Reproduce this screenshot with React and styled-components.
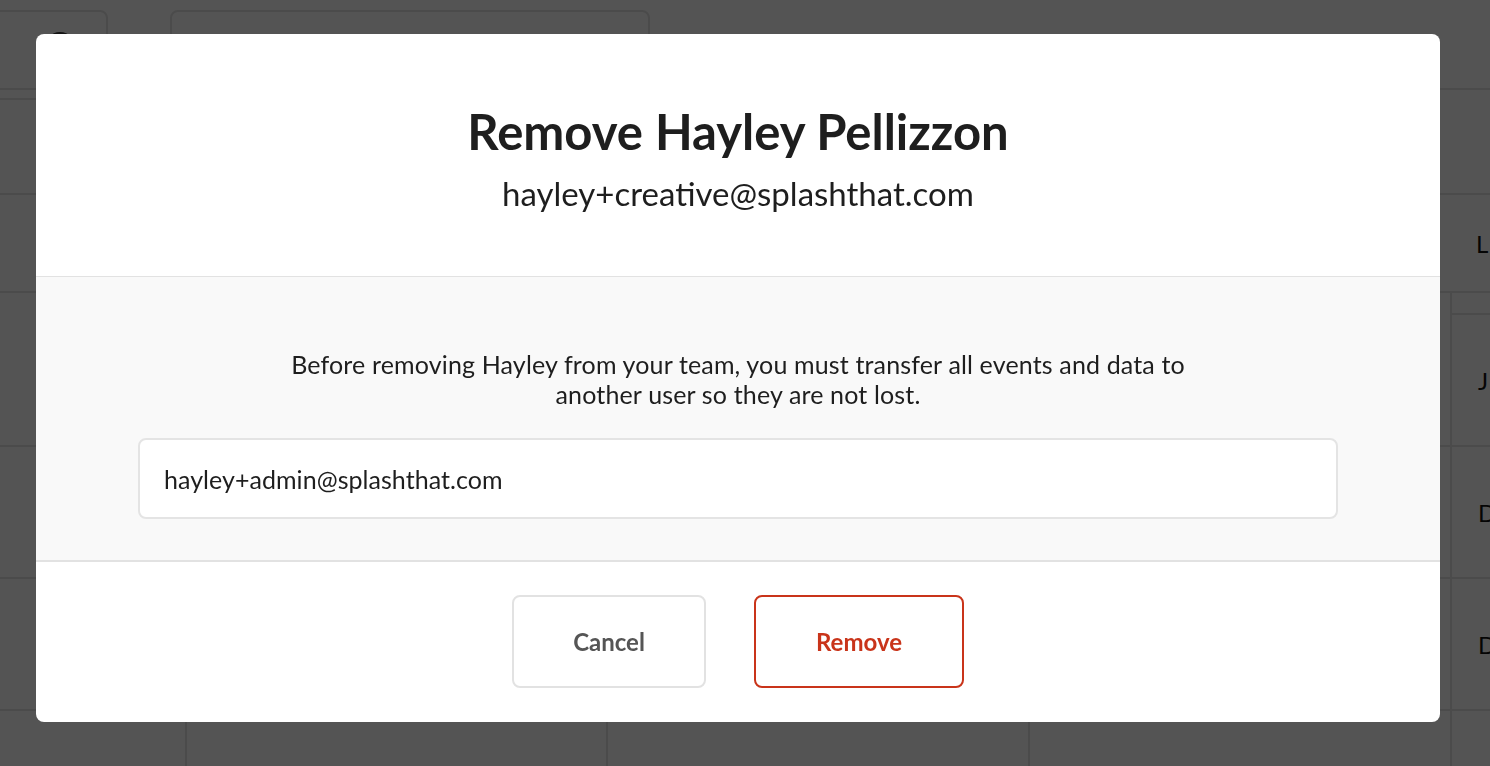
import React from "react";
import styled, { createGlobalStyle } from "styled-components";

const GlobalStyle = createGlobalStyle`
  html, body {
    margin: 0;
    padding: 0;
    width: 100%;
    height: 100%;
    overflow: hidden;
    background: #ffffff;
    font-family: Lato, "Open Sans", "Liberation Sans", sans-serif;
  }
  * { box-sizing: border-box; }
`;

const rows = ["J", "D", "D", ""];

export default function App() {
  return (
    <>
      <GlobalStyle />
      <StPage>
        <div className="top_bar">
          <div className="top_card small">
            <span className="avatar" />
          </div>
          <div className="top_card wide" />
        </div>
        <div className="sub_bar" />
        <div className="table_head">
          <span />
          <span />
          <span />
          <span />
          <span className="cell_text">L</span>
        </div>
        <div className="table_band" />
        {rows.map((r, i) => (
          <div className="table_row" key={i}>
            <span />
            <span />
            <span />
            <span />
            <span className="cell_text">{r}</span>
          </div>
        ))}
      </StPage>

      <StOverlay>
        <StModal>
          <div className="modal_header">
            <h1 className="modal_title">Remove Hayley Pellizzon</h1>
            <div className="modal_sub">hayley+creative@splashthat.com</div>
          </div>
          <div className="modal_body">
            <p className="modal_text">
              Before removing Hayley from your team, you must transfer all
              events and data to
              <br />
              another user so they are not lost.
            </p>
            <div className="modal_input">hayley+admin@splashthat.com</div>
          </div>
          <div className="modal_footer">
            <StButton>Cancel</StButton>
            <StButton danger>Remove</StButton>
          </div>
        </StModal>
      </StOverlay>
    </>
  );
}

const StPage = styled.div`
  width: 1490px;
  height: 766px;
  overflow: hidden;
  background: #ffffff;
  color: #333333;

  .top_bar {
    height: 90px;
    display: flex;
    align-items: flex-start;
    padding-top: 10px;
    gap: 62px;
    border-bottom: 2px solid #e2e2e2;
  }
  .top_card {
    height: 90px;
    border: 2px solid #e2e2e2;
    border-radius: 8px;
    position: relative;
  }
  .top_card.small {
    width: 118px;
    margin-left: -10px;
  }
  .top_card.wide {
    width: 480px;
  }
  .avatar {
    position: absolute;
    left: 52px;
    top: 20px;
    width: 32px;
    height: 32px;
    border-radius: 50%;
    background: #3a3a3a;
  }
  .sub_bar {
    height: 105px;
    border-bottom: 2px solid #e2e2e2;
  }
  .table_head,
  .table_row {
    display: grid;
    grid-template-columns: 185px 421px 422px 422px 40px;
    border-bottom: 2px solid #e2e2e2;
  }
  .table_head {
    height: 98px;
  }
  .table_row {
    height: 132px;
  }
  .table_row span + span {
    border-left: 2px solid #e2e2e2;
  }
  .table_band {
    height: 22px;
    border-bottom: 2px solid #e2e2e2;
    margin-left: 1450px;
    border-left: 2px solid #e2e2e2;
  }
  .cell_text {
    display: flex;
    align-items: center;
    padding-left: 26px;
    font-size: 24px;
    white-space: nowrap;
    color: #111111;
  }
`;

const StOverlay = styled.div`
  position: fixed;
  inset: 0;
  background: rgba(0, 0, 0, 0.67);
  display: flex;
  align-items: flex-start;
  padding: 34px 50px 0 36px;
`;

const StModal = styled.div`
  width: 1404px;
  height: 688px;
  background: #ffffff;
  border-radius: 8px;
  overflow: hidden;
  display: flex;
  flex-direction: column;
  color: #1e1e1e;

  .modal_header {
    height: 243px;
    padding-top: 68px;
    text-align: center;
    border-bottom: 1px solid #e2e2e2;
  }
  .modal_title {
    margin: 0;
    font-size: 49px;
    font-weight: 700;
    line-height: 58px;
    color: #1e1e1e;
  }
  .modal_sub {
    margin-top: 13px;
    font-size: 33px;
    line-height: 40px;
    color: #1e1e1e;
  }
  .modal_body {
    height: 285px;
    background: #f9f9f9;
    border-bottom: 2px solid #e2e2e2;
    padding: 72px 102px 0;
  }
  .modal_text {
    margin: 0;
    text-align: center;
    font-size: 25px;
    line-height: 30px;
    letter-spacing: 0.15px;
    color: #1e1e1e;
  }
  .modal_input {
    margin-top: 29px;
    height: 81px;
    background: #ffffff;
    border: 2px solid #e4e4e4;
    border-radius: 8px;
    display: flex;
    align-items: center;
    padding-left: 24px;
    font-size: 25px;
    letter-spacing: 0.05px;
    color: #1e1e1e;
  }
  .modal_footer {
    flex: 1;
    display: flex;
    justify-content: center;
    align-items: flex-start;
    padding-top: 33px;
    gap: 48px;
  }
`;

const StButton = styled.button`
  height: 93px;
  width: ${(p) => (p.danger ? "210px" : "194px")};
  background: #ffffff;
  border: 2px solid ${(p) => (p.danger ? "#c9341a" : "#e2e2e2")};
  border-radius: 8px;
  font-family: Lato, "Open Sans", "Liberation Sans", sans-serif;
  font-size: 24px;
  font-weight: 700;
  color: ${(p) => (p.danger ? "#c9341a" : "#555555")};
  cursor: pointer;
`;
